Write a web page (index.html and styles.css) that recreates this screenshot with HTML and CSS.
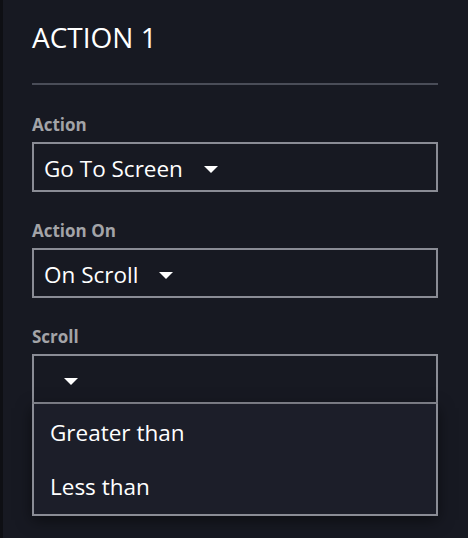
FILE: index.html
```html
<!DOCTYPE html>
<html>
<head>
<meta charset="utf-8">
<link rel="stylesheet" href="styles.css">
</head>
<body>
<div class="panel">
  <h1 class="title">ACTION 1</h1>
  <div class="divider"></div>
  <div class="field">
    <div class="label">Action</div>
    <div class="select"><span class="value">Go To Screen</span><span class="caret"></span></div>
  </div>
  <div class="field">
    <div class="label">Action On</div>
    <div class="select"><span class="value">On Scroll</span><span class="caret"></span></div>
  </div>
  <div class="field">
    <div class="label">Scroll</div>
    <div class="select open"><span class="value"></span><span class="caret"></span></div>
    <div class="menu">
      <div class="option">Greater than</div>
      <div class="option">Less than</div>
    </div>
  </div>
</div>
</body>
</html>
```
FILE: styles.css
```css
html, body { margin: 0; padding: 0; }
body {
  background: #171922;
  width: 468px;
  height: 538px;
  overflow: hidden;
  font-family: "Open Sans", "Noto Sans", sans-serif;
  color: #fff;
}
.panel {
  border-left: 3px solid #0e0f14;
  height: 538px;
  box-sizing: border-box;
  padding: 18px 30px 0 29px;
}
.title {
  margin: 0;
  font-size: 28px;
  font-weight: 400;
  line-height: 38px;
  letter-spacing: 0;
}
.divider {
  height: 2px;
  background: #4a4d58;
  margin-top: 27px;
}
.field { margin-top: 29px; }
.field + .field { margin-top: 28px; }
.label {
  font-size: 17px;
  font-weight: 700;
  color: #a3a4a8;
  line-height: 22px;
}
.select {
  margin-top: 6px;
  height: 50px;
  box-sizing: border-box;
  border: 2px solid #8a8c95;
  display: flex;
  align-items: center;
  padding-left: 10px;
  padding-top: 4px;
  gap: 21px;
}
.value {
  font-size: 22.5px;
  line-height: 30px;
}
.caret {
  width: 0;
  height: 0;
  border-left: 7px solid transparent;
  border-right: 7px solid transparent;
  border-top: 7px solid #fff;
  margin-top: 0;
}
.select.open { padding-left: 30px; gap: 0; }
.select.open .value { display: none; }
.menu {
  border: 2px solid #8a8c95;
  border-top: none;
  background: #1c1e29;
  box-shadow: 0 4px 14px rgba(0,0,0,0.5);
  padding: 2px 0 0;
}
.option {
  font-size: 22.5px;
  line-height: 54px;
  height: 54px;
  padding: 0 16px;
}
```
